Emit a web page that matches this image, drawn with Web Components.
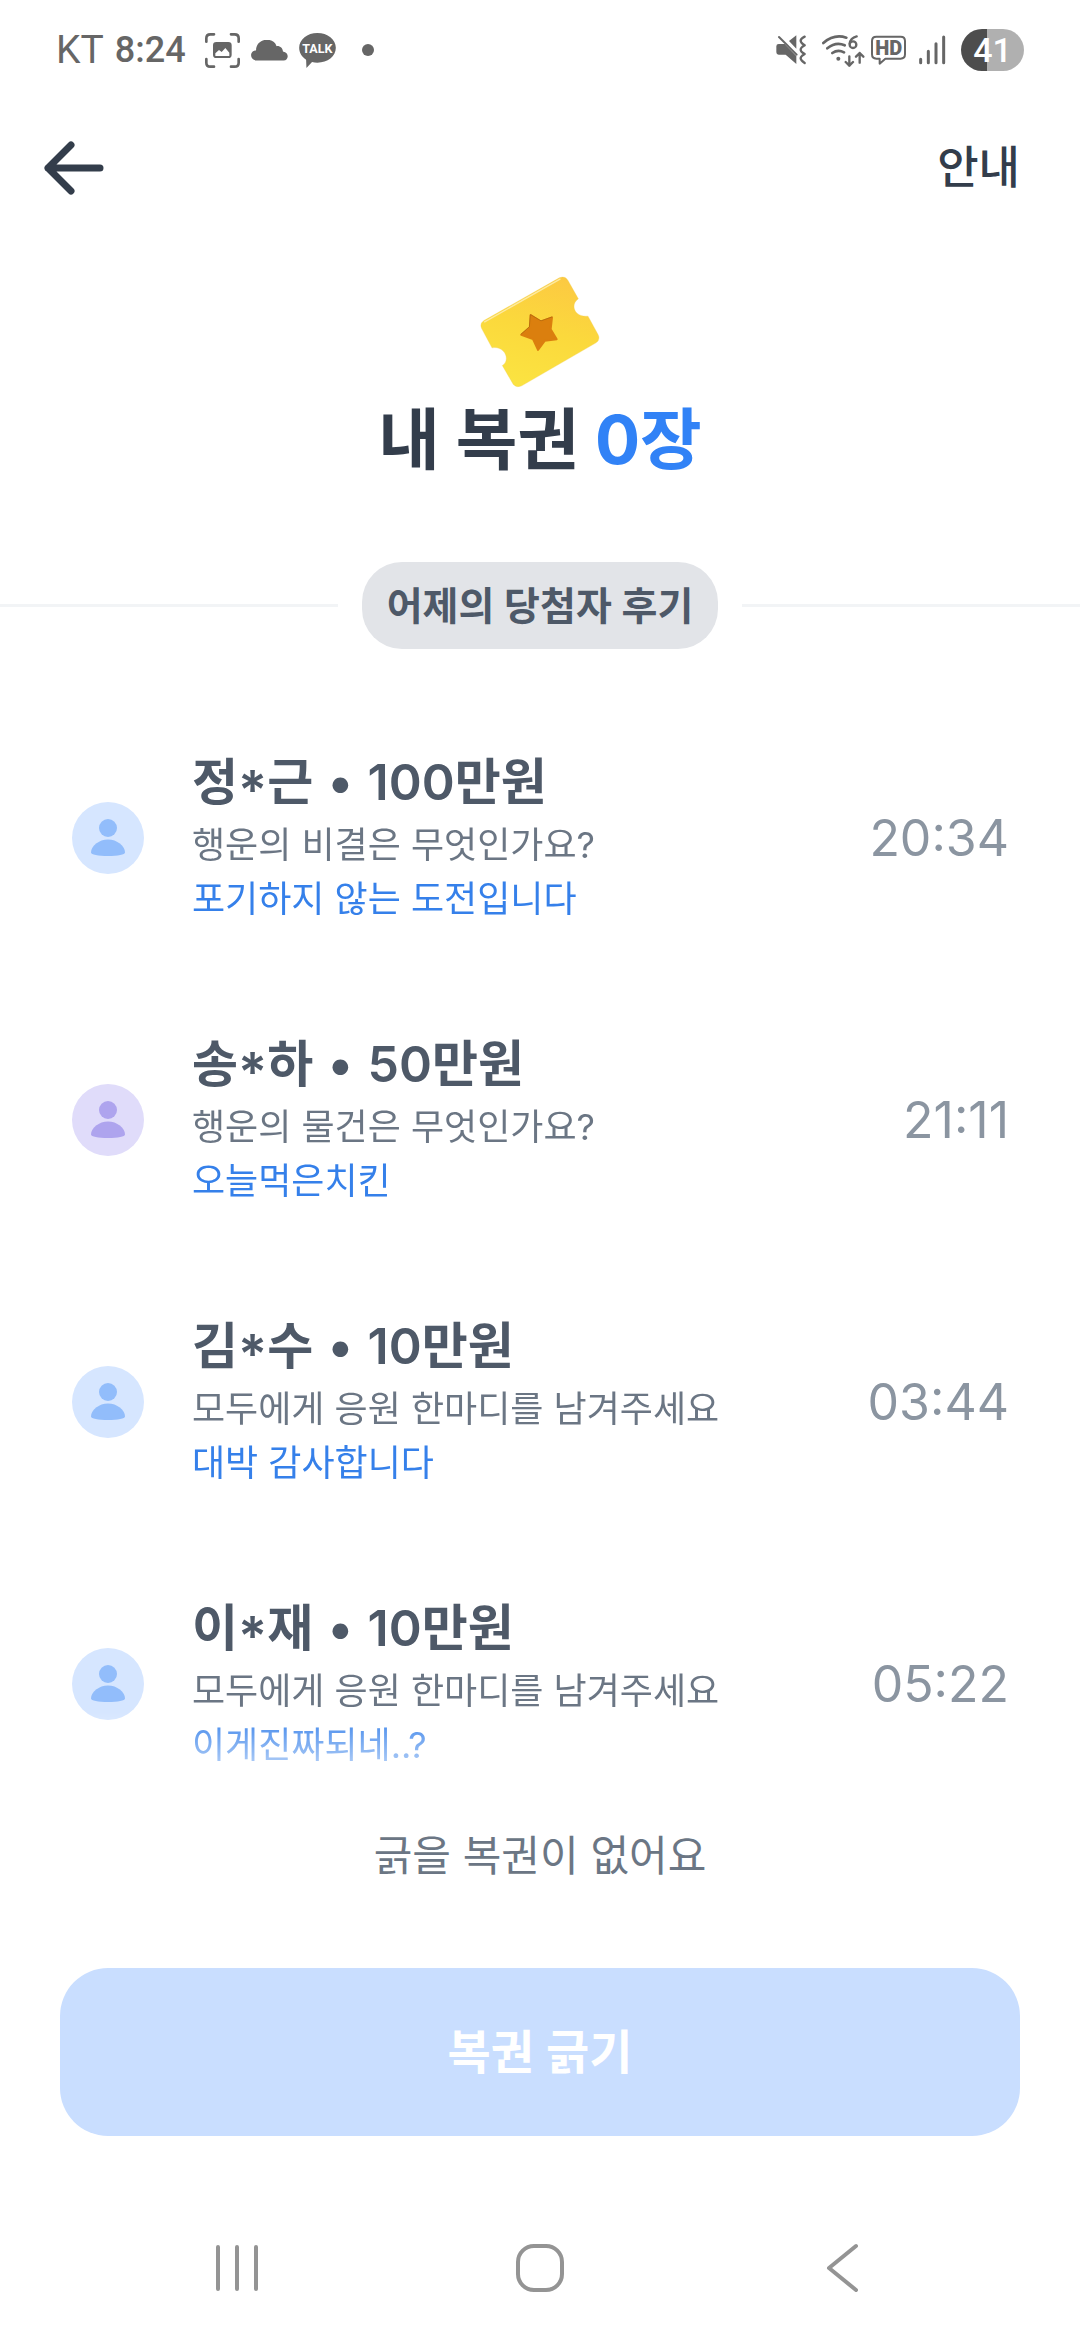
<!DOCTYPE html>
<html lang="ko">
<head>
<meta charset="utf-8">
<meta name="viewport" content="width=device-width, initial-scale=1">
<title>내 복권</title>
<style>
  html, body { margin: 0; height: 100%; }
  body {
    background: #fff;
    color: #333d4b;
    font-family: Inter, "Noto Sans CJK KR", sans-serif;
  }
</style>
</head>
<body>
<lottery-page>
  <status-bar slot="top"></status-bar>
  <page-header slot="top"><span>안내</span></page-header>
  <ticket-summary slot="top" count="0장">내 복권</ticket-summary>
  <section-divider slot="top">어제의 당첨자 후기</section-divider>
  <winner-review name="정*근" prize="100만원" time="20:34">행운의 비결은 무엇인가요?<span slot="answer">포기하지 않는 도전입니다</span></winner-review>
  <winner-review name="송*하" prize="50만원" time="21:11" tone="violet">행운의 물건은 무엇인가요?<span slot="answer">오늘먹은치킨</span></winner-review>
  <winner-review name="김*수" prize="10만원" time="03:44">모두에게 응원 한마디를 남겨주세요<span slot="answer">대박 감사합니다</span></winner-review>
  <winner-review name="이*재" prize="10만원" time="05:22">모두에게 응원 한마디를 남겨주세요<span slot="answer">이게진짜되네..?</span></winner-review>
  <scratch-action slot="bottom" label="복권 긁기">긁을 복권이 없어요</scratch-action>
  <system-nav slot="bottom"></system-nav>
</lottery-page>

<script>
const define = (name, render) => customElements.define(name, class extends HTMLElement {
  constructor() {
    super();
    this.attachShadow({ mode: 'open' });
  }
  connectedCallback() {
    this.shadowRoot.innerHTML = render(this);
  }
});

define('lottery-page', () => `
  <style>
    :host { display: flex; flex-direction: column; height: 100vh; }
    main {
      flex: 1;
      min-height: 0;
      overflow: hidden;
      -webkit-mask-image: linear-gradient(#000 calc(100% - 88px), transparent);
      mask-image: linear-gradient(#000 calc(100% - 88px), transparent);
    }
  </style>
  <slot name="top"></slot>
  <main><slot></slot></main>
  <slot name="bottom"></slot>`);

define('status-bar', () => `
  <style>
    :host {
      display: flex;
      justify-content: space-between;
      align-items: center;
      height: 100px;
      padding: 0 56px;
      color: #666;
      font-family: Roboto, sans-serif;
    }
    div { display: flex; align-items: center; gap: 12px; }
    .left { gap: 11px; }
    .carrier { font-size: 39px; font-weight: 400; }
    .clock { font-size: 36px; font-weight: 500; margin-right: 8px; }
    svg { display: block; fill: #666; }
    .line { fill: none; stroke: #666; stroke-linecap: round; stroke-linejoin: round; }
    .more { margin-left: 15px; }
    .mute { margin-right: 4px; }
    .hd { margin-left: -6px; }
    .battery {
      width: 63px;
      height: 42px;
      border-radius: 21px;
      background: linear-gradient(90deg, #4d4d4d 41%, #b0b0b0 41%);
      color: #fff;
      font-size: 34px;
      font-weight: 500;
      justify-content: center;
      margin-left: 3px;
    }
  </style>
  <div class="left">
    <span class="carrier">KT</span>
    <span class="clock">8:24</span>
    <svg width="35" height="35" viewBox="492 72 105 105">
      <path class="line" stroke-width="8" d="M496 98V88Q496 76 508 76H519M570 76H581Q593 76 593 88V98M593 150V161Q593 173 581 173H570M519 173H508Q496 173 496 161V150"/>
      <path fill-rule="evenodd" d="M526 99H562Q572 99 572 109V137Q572 147 562 147H526Q516 147 516 137V109Q516 99 526 99ZM523 141H565V131L553 117L542 129L534 123L523 133Z"/>
    </svg>
    <svg width="37" height="21" viewBox="630 89 110 62">
      <path d="M647 150C625 149 625 120 645 120C645 82 697 78 706 107C717 106 724 113 725 123C745 126 742 150 727 150Z"/>
    </svg>
    <svg width="37" height="35" viewBox="771 71 111 106">
      <path d="M826 71C857 71 882 90 882 116C882 142 857 161 826 161C820 161 815 160 810 159L793 177L792 152C779 144 771 131 771 116C771 90 796 71 826 71Z"/>
      <text x="826" y="131" text-anchor="middle" fill="#fff" font-family="Roboto, sans-serif" font-size="38" font-weight="700">TALK</text>
    </svg>
    <svg class="more" width="12" height="12" viewBox="0 0 12 12"><circle cx="6" cy="6" r="6"/></svg>
  </div>
  <div>
    <svg class="mute" width="30" height="30" viewBox="110 78 90 90">
      <path d="M118 105H136L171 141V165L139 137H118Q111 137 111 130V112Q111 105 118 105ZM149 96L171 79V119Z"/>
      <path class="line" stroke-width="6" d="M119 84L172 137"/>
      <path class="line" stroke-width="7" d="M196 83Q184 89 184 95T196 109Q184 116 184 122T196 135Q184 142 184 148T196 162"/>
    </svg>
    <svg width="43" height="33" viewBox="245 72 129 99">
      <path class="line" stroke-width="8" d="M249 99Q281 71 318 83M261 115Q287 94 313 106M276 129Q293 117 311 127"/>
      <circle cx="294" cy="146" r="6"/>
      <path class="line" stroke-width="7" d="M349 79Q330 84 328 101M327 139V167M316 156L327 167L338 156M358 158V129M347 140L358 129L369 140"/>
      <circle class="line" stroke-width="7" cx="338" cy="104" r="10"/>
    </svg>
    <svg class="hd" width="35" height="30" viewBox="394 79 105 90">
      <path class="line" stroke-width="6" d="M410 84H483Q496 84 496 97V137Q496 150 483 150H437L420 165V150H410Q397 150 397 137V97Q397 84 410 84Z"/>
      <text x="447" y="138" text-anchor="middle" font-family="Roboto, sans-serif" font-size="60" font-weight="900">HD</text>
    </svg>
    <svg width="28" height="30" viewBox="532 77 84 90">
      <path class="line" stroke-width="9" d="M540 150V160M563 126V160M586 103V160M609 83V160"/>
    </svg>
    <div class="battery">41</div>
  </div>`);

define('page-header', () => `
  <style>
    :host {
      display: flex;
      justify-content: space-between;
      align-items: center;
      height: 136px;
      padding: 0 60px 0 40px;
    }
    button {
      display: block;
      padding: 0;
      border: 0;
      background: none;
      color: #333d4b;
      font: 500 45px/64px Inter, "Noto Sans CJK KR", sans-serif;
    }
    svg { display: block; }
  </style>
  <button type="button" aria-label="뒤로">
    <svg width="68" height="60" viewBox="0 0 68 60" fill="none" stroke="#333d4b" stroke-width="7" stroke-linecap="round" stroke-linejoin="round">
      <path d="M31 7L8 30L31 53M8 30H60"/>
    </svg>
  </button>
  <button type="button"><slot></slot></button>`);

define('ticket-summary', el => `
  <style>
    :host {
      display: flex;
      flex-direction: column;
      align-items: center;
      padding: 40px 0 74px;
    }
    svg { display: block; }
    h1 { margin: 4px 0 0; font-size: 67px; line-height: 96px; font-weight: 700; }
    em { font-style: normal; color: #3182f6; }
  </style>
  <svg width="120" height="112" viewBox="360 75 360 335">
    <defs>
      <linearGradient id="gold" x1=".7" y1="0" x2=".4" y2="1">
        <stop offset="0" stop-color="#fcc942"/>
        <stop offset=".5" stop-color="#fbd93c"/>
        <stop offset="1" stop-color="#fbe341"/>
      </linearGradient>
    </defs>
    <path fill="url(#gold)" stroke="#f0cf52" stroke-width="1" d="M372 208L598 80Q615 73 624 88L655 143C630 160 642 199 684 195L714 250Q722 265 708 275L485 404Q470 411 460 400L427 343C453 327 434 283 396 290L365 232Q358 217 372 208Z"/>
    <path fill="none" stroke="#fdeaa0" stroke-width="4" stroke-linecap="round" d="M374 212L600 84"/>
    <path fill="#db7f0e" stroke="#db7f0e" stroke-width="6" stroke-linejoin="round" d="M512 192L543 211L576 199L572 234L590 264L554 269L534 296L519 264L484 251L510 228Z"/>
    <path fill="none" stroke="#a9600d" stroke-width="2" stroke-linejoin="round" d="M482 250L508 227L511 190L543 209L577 197"/>
  </svg>
  <h1><slot></slot> <em>${el.getAttribute('count')}</em></h1>`);

define('section-divider', () => `
  <style>
    :host { display: flex; align-items: center; gap: 24px; margin-bottom: 48px; }
    :host::before, :host::after { content: ""; flex: 1; height: 3px; background: #f2f4f6; }
    h2 {
      margin: 0;
      padding: 13px 25px;
      border-radius: 40px;
      background: #e2e4e8;
      color: #4e5968;
      font-size: 39px;
      line-height: 61px;
      font-weight: 600;
    }
  </style>
  <h2><slot></slot></h2>`);

define('winner-review', el => {
  const name = el.getAttribute('name').replace('*', '<span class="mask">*</span>');
  return `
  <style>
    :host {
      --disc: #d6e6ff;
      --person: #92bdfb;
      display: flex;
      align-items: center;
      gap: 48px;
      padding: 49px 71px 49px 72px;
    }
    :host([tone="violet"]) { --disc: #e0dcfa; --person: #aea4ee; }
    svg { display: block; flex: none; }
    .body { flex: 1; padding-bottom: 4px; }
    h3, p { margin: 0; }
    h3 { color: #4e5968; font-size: 50px; line-height: 72px; font-weight: 600; }
    .mask { font-size: 54px; line-height: 0; vertical-align: -9px; }
    .dot { margin: 0 2px; }
    p { color: #6b7684; font-size: 36px; line-height: 54px; }
    .answer { color: #3580ea; }
    time { color: #8b95a1; font-size: 50px; line-height: 72px; font-weight: 400; }
  </style>
  <svg width="72" height="72" viewBox="0 0 72 72">
    <circle cx="36" cy="36" r="36" fill="var(--disc)"/>
    <circle cx="36" cy="26" r="9" fill="var(--person)"/>
    <path fill="var(--person)" d="M36 37.500C45 37.500 53 44 53 50.500C53 52.500 46 54 36 54S19 52.500 19 50.500C19 44 27 37.500 36 37.500Z"/>
  </svg>
  <div class="body">
    <h3>${name} <span class="dot">•</span> ${el.getAttribute('prize')}</h3>
    <p><slot></slot></p>
    <p class="answer"><slot name="answer"></slot></p>
  </div>
  <time>${el.getAttribute('time')}</time>`;
});

define('scratch-action', el => `
  <style>
    :host { display: block; padding: 24px 60px 60px; text-align: center; }
    p { margin: 0 0 80px; color: #6b7684; font-size: 42px; line-height: 64px; }
    button {
      display: block;
      width: 100%;
      padding: 48px;
      border: 0;
      border-radius: 48px;
      background: #c9deff;
      color: #fff;
      font: 600 47px/72px Inter, "Noto Sans CJK KR", sans-serif;
    }
  </style>
  <p><slot></slot></p>
  <button type="button" disabled>${el.getAttribute('label')}</button>`);

define('system-nav', () => `
  <style>
    :host { display: block; padding: 0 136px; }
    nav { display: flex; justify-content: space-between; height: 144px; }
    button { width: 202px; padding: 0; border: 0; background: none; }
    svg { display: block; margin: 0 auto; fill: none; stroke: #949494; stroke-width: 4; stroke-linecap: round; stroke-linejoin: round; }
  </style>
  <nav>
    <button type="button" aria-label="최근 앱"><svg width="52" height="52" viewBox="0 0 52 52"><path d="M7 5V47M26 5V47M45 5V47"/></svg></button>
    <button type="button" aria-label="홈"><svg width="52" height="52" viewBox="0 0 52 52"><rect x="4" y="4" width="44" height="44" rx="16"/></svg></button>
    <button type="button" aria-label="뒤로"><svg width="52" height="52" viewBox="0 0 52 52"><path d="M39 4L12 26L39 48"/></svg></button>
  </nav>`);
</script>
</body>
</html>
